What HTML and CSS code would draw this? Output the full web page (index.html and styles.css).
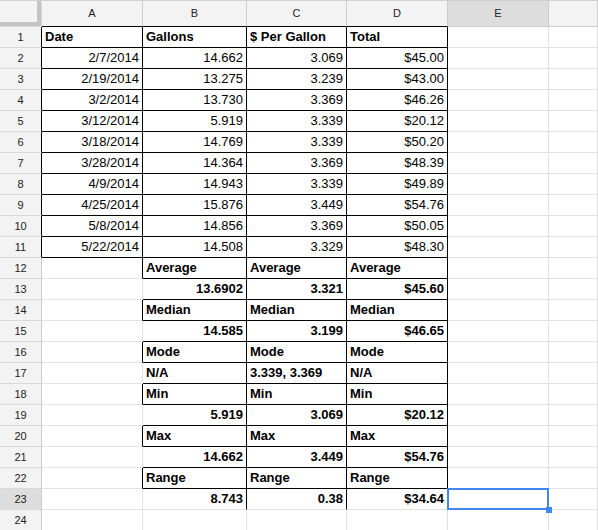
FILE: index.html
```html
<!DOCTYPE html>
<html>
<head>
<meta charset="utf-8">
<link rel="stylesheet" href="styles.css">
</head>
<body>
<div class="sheet">
  <div class="ch corner"></div>
  <div class="ch kb">A</div>
  <div class="ch kb">B</div>
  <div class="ch kb">C</div>
  <div class="ch kb">D</div>
  <div class="ch hl">E</div>
  <div class="ch"></div>

  <div class="rh k">1</div>
  <div class="c r b bd">Date</div>
  <div class="c r b bd">Gallons</div>
  <div class="c r b bd">$ Per Gallon</div>
  <div class="c r b bd">Total</div>
  <div class="c"></div><div class="c"></div>

  <div class="rh k">2</div>
  <div class="c r b n">2/7/2014</div><div class="c r b n">14.662</div><div class="c r b n">3.069</div><div class="c r b n">$45.00</div>
  <div class="c"></div><div class="c"></div>

  <div class="rh k">3</div>
  <div class="c r b n">2/19/2014</div><div class="c r b n">13.275</div><div class="c r b n">3.239</div><div class="c r b n">$43.00</div>
  <div class="c"></div><div class="c"></div>

  <div class="rh k">4</div>
  <div class="c r b n">3/2/2014</div><div class="c r b n">13.730</div><div class="c r b n">3.369</div><div class="c r b n">$46.26</div>
  <div class="c"></div><div class="c"></div>

  <div class="rh k">5</div>
  <div class="c r b n">3/12/2014</div><div class="c r b n">5.919</div><div class="c r b n">3.339</div><div class="c r b n">$20.12</div>
  <div class="c"></div><div class="c"></div>

  <div class="rh k">6</div>
  <div class="c r b n">3/18/2014</div><div class="c r b n">14.769</div><div class="c r b n">3.339</div><div class="c r b n">$50.20</div>
  <div class="c"></div><div class="c"></div>

  <div class="rh k">7</div>
  <div class="c r b n">3/28/2014</div><div class="c r b n">14.364</div><div class="c r b n">3.369</div><div class="c r b n">$48.39</div>
  <div class="c"></div><div class="c"></div>

  <div class="rh k">8</div>
  <div class="c r b n">4/9/2014</div><div class="c r b n">14.943</div><div class="c r b n">3.339</div><div class="c r b n">$49.89</div>
  <div class="c"></div><div class="c"></div>

  <div class="rh k">9</div>
  <div class="c r b n">4/25/2014</div><div class="c r b n">15.876</div><div class="c r b n">3.449</div><div class="c r b n">$54.76</div>
  <div class="c"></div><div class="c"></div>

  <div class="rh k">10</div>
  <div class="c r b n">5/8/2014</div><div class="c r b n">14.856</div><div class="c r b n">3.369</div><div class="c r b n">$50.05</div>
  <div class="c"></div><div class="c"></div>

  <div class="rh k">11</div>
  <div class="c r b n">5/22/2014</div><div class="c r b n">14.508</div><div class="c r b n">3.329</div><div class="c r b n">$48.30</div>
  <div class="c"></div><div class="c"></div>

  <div class="rh">12</div>
  <div class="c r"></div>
  <div class="c r b bd">Average</div><div class="c r b bd">Average</div><div class="c r b bd">Average</div>
  <div class="c"></div><div class="c"></div>

  <div class="rh">13</div>
  <div class="c"></div>
  <div class="c r b bd n">13.6902</div><div class="c r b bd n">3.321</div><div class="c r b bd n">$45.60</div>
  <div class="c"></div><div class="c"></div>

  <div class="rh">14</div>
  <div class="c r"></div>
  <div class="c r b bd">Median</div><div class="c r b bd">Median</div><div class="c r b bd">Median</div>
  <div class="c"></div><div class="c"></div>

  <div class="rh">15</div>
  <div class="c"></div>
  <div class="c r b bd n">14.585</div><div class="c r b bd n">3.199</div><div class="c r b bd n">$46.65</div>
  <div class="c"></div><div class="c"></div>

  <div class="rh">16</div>
  <div class="c r"></div>
  <div class="c r b bd">Mode</div><div class="c r b bd">Mode</div><div class="c r b bd">Mode</div>
  <div class="c"></div><div class="c"></div>

  <div class="rh">17</div>
  <div class="c"></div>
  <div class="c r b bd">N/A</div><div class="c r b bd">3.339, 3.369</div><div class="c r b bd">N/A</div>
  <div class="c"></div><div class="c"></div>

  <div class="rh">18</div>
  <div class="c r"></div>
  <div class="c r b bd">Min</div><div class="c r b bd">Min</div><div class="c r b bd">Min</div>
  <div class="c"></div><div class="c"></div>

  <div class="rh">19</div>
  <div class="c"></div>
  <div class="c r b bd n">5.919</div><div class="c r b bd n">3.069</div><div class="c r b bd n">$20.12</div>
  <div class="c"></div><div class="c"></div>

  <div class="rh">20</div>
  <div class="c r"></div>
  <div class="c r b bd">Max</div><div class="c r b bd">Max</div><div class="c r b bd">Max</div>
  <div class="c"></div><div class="c"></div>

  <div class="rh">21</div>
  <div class="c"></div>
  <div class="c r b bd n">14.662</div><div class="c r b bd n">3.449</div><div class="c r b bd n">$54.76</div>
  <div class="c"></div><div class="c"></div>

  <div class="rh">22</div>
  <div class="c r"></div>
  <div class="c r b bd">Range</div><div class="c r b bd">Range</div><div class="c r b bd">Range</div>
  <div class="c"></div><div class="c"></div>

  <div class="rh hl">23</div>
  <div class="c"></div>
  <div class="c r bd n">8.743</div><div class="c r bd n">0.38</div><div class="c r bd n">$34.64</div>
  <div class="c sel"><span class="handle"></span></div><div class="c"></div>

  <div class="rh">24</div>
  <div class="c"></div><div class="c"></div><div class="c"></div><div class="c"></div><div class="c"></div><div class="c"></div>
</div>
</body>
</html>
```

FILE: styles.css
```css
html, body {
  margin: 0;
  padding: 0;
  background: #ffffff;
  overflow: hidden;
}

.sheet {
  display: grid;
  grid-template-columns: 42px 101px 104px 100px 101px 101px 1fr;
  grid-template-rows: 27px repeat(24, 21px);
  font-family: "Liberation Sans", Arial, sans-serif;
  color: #000;
}

.ch {
  box-sizing: border-box;
  background: #f3f3f3;
  border-top: 1px solid #d0d0d0;
  border-right: 1px solid #cccccc;
  border-bottom: 1px solid #cccccc;
  font-size: 11px;
  line-height: 25px;
  text-align: center;
  color: #222;
}

.ch.kb {
  border-bottom-color: #000;
}

.ch.hl, .rh.hl {
  background: #dddddd;
}

.corner {
  box-shadow: inset -4px -4px 0 #c4c4c4;
  border-right-color: #d8d8d8;
  border-bottom-color: #d8d8d8;
}

.rh {
  box-sizing: border-box;
  background: #f3f3f3;
  border-right: 1px solid #cccccc;
  border-bottom: 1px solid #d9d9d9;
  font-size: 11px;
  line-height: 20px;
  text-align: center;
  color: #222;
}

.rh.k {
  border-right-color: #000;
}

.c {
  box-sizing: border-box;
  border-right: 1px solid #e2e2e2;
  border-bottom: 1px solid #e2e2e2;
  font-size: 13px;
  line-height: 20px;
  padding: 0 3px;
  white-space: nowrap;
  overflow: hidden;
}

.c.r {
  border-right-color: #000;
}

.c.b {
  border-bottom-color: #000;
}

.n {
  text-align: right;
}

.bd {
  font-weight: bold;
}

.c.sel {
  position: relative;
  overflow: visible;
}

.c.sel::before {
  content: "";
  position: absolute;
  top: -1px;
  left: -1px;
  right: -1px;
  bottom: -1px;
  border: 2px solid #4285f4;
}

.handle {
  position: absolute;
  right: -4px;
  bottom: -4px;
  width: 6px;
  height: 6px;
  background: #4285f4;
  z-index: 2;
}
```
